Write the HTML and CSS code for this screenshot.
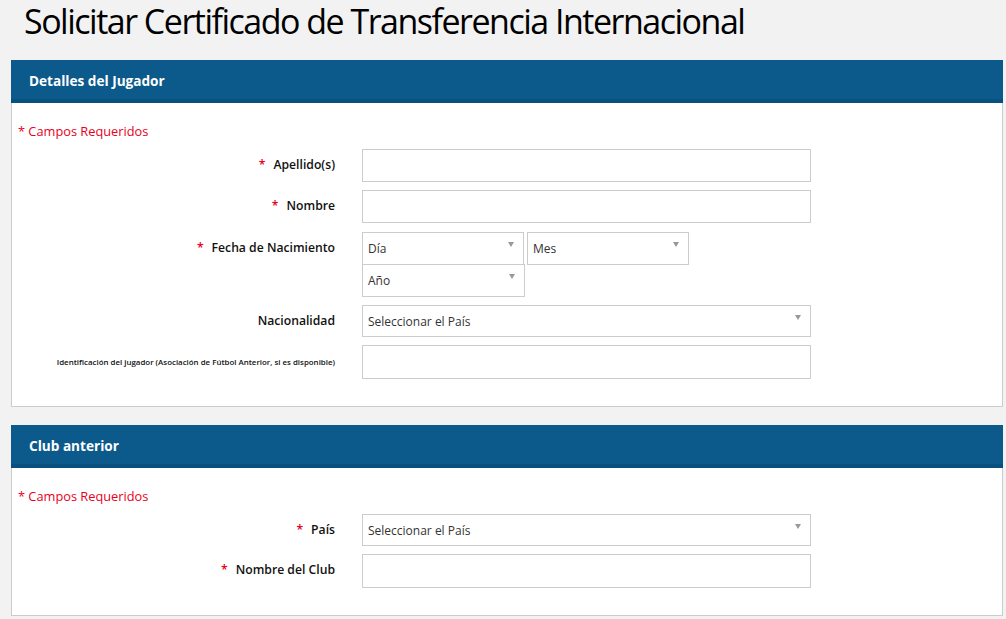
FILE: index.html
```html
<!DOCTYPE html>
<html lang="es">
<head>
  <meta charset="UTF-8">
  <title>Solicitar Certificado de Transferencia Internacional</title>
  <link rel="stylesheet" href="styles.css">
</head>
<body>
  <h1 class="page-title">Solicitar Certificado de Transferencia Internacional</h1>

  <div class="panel">
    <div class="panel-head">Detalles del Jugador</div>
    <div class="panel-body">
      <p class="req-note">* Campos Requeridos</p>

      <div class="form-row">
        <label class="field-label"><span class="star">*</span>Apellido(s)</label>
        <div class="text-input"></div>
      </div>
      <div class="form-row">
        <label class="field-label"><span class="star">*</span>Nombre</label>
        <div class="text-input"></div>
      </div>
      <div class="form-row date-row">
        <label class="field-label"><span class="star">*</span>Fecha de Nacimiento</label>
        <div class="date-group">
          <div class="select small"><span>Día</span><i class="caret"></i></div>
          <div class="select small"><span>Mes</span><i class="caret"></i></div>
          <div class="select small year"><span>Año</span><i class="caret"></i></div>
        </div>
      </div>
      <div class="form-row">
        <label class="field-label">Nacionalidad</label>
        <div class="select"><span>Seleccionar el País</span><i class="caret"></i></div>
      </div>
      <div class="form-row">
        <label class="field-label tiny">Identificación del jugador (Asociación de Fútbol Anterior, si es disponible)</label>
        <div class="text-input tall"></div>
      </div>
    </div>
  </div>

  <div class="panel">
    <div class="panel-head">Club anterior</div>
    <div class="panel-body">
      <p class="req-note">* Campos Requeridos</p>

      <div class="form-row">
        <label class="field-label"><span class="star">*</span>País</label>
        <div class="select"><span>Seleccionar el País</span><i class="caret"></i></div>
      </div>
      <div class="form-row">
        <label class="field-label"><span class="star">*</span>Nombre del Club</label>
        <div class="text-input tall"></div>
      </div>
    </div>
  </div>
</body>
</html>
```

FILE: styles.css
```css
* {
  box-sizing: border-box;
}

body {
  margin: 0;
  background: #f2f2f2;
  font-family: 'Open Sans', 'DejaVu Sans', sans-serif;
  color: #111;
}

.page-title {
  margin: 0;
  height: 60px;
  padding: 0 0 0 24px;
  font-size: 34px;
  font-weight: 500;
  line-height: 42px;
  letter-spacing: -1.5px;
  color: #000;
}

.panel {
  margin: 0 3px 18px 11px;
  background: #fff;
  border: 1px solid #ccc;
  border-top: none;
}

.panel-head {
  margin: 0 -1px;
  height: 43px;
  padding: 0 0 0 18px;
  background: #0b5a8b;
  border-bottom: 4px solid #08507d;
  color: #fff;
  font-size: 13.6px;
  font-weight: 700;
  line-height: 41px;
}

.panel-body {
  padding: 19px 0 27px 0;
}

.req-note {
  margin: 0 0 9px 6px;
  color: #e8001c;
  font-size: 12.8px;
  line-height: 18px;
}

.form-row {
  display: grid;
  grid-template-columns: 323px 449px;
  column-gap: 27px;
  align-items: start;
  margin-bottom: 8px;
}

.form-row:last-child {
  margin-bottom: 0;
}

.date-row {
  margin-top: 9px;
}

.field-label {
  display: block;
  text-align: right;
  font-size: 12.2px;
  font-weight: 600;
  line-height: 32px;
  color: #111;
}

.field-label.tiny {
  font-size: 7.9px;
  line-height: 34px;
}

.star {
  color: #e8001c;
  margin-right: 8px;
}

.text-input {
  height: 33px;
  border: 1px solid #ccc;
  background: #fff;
}

.text-input.tall {
  height: 34px;
}

.select {
  display: flex;
  align-items: center;
  justify-content: space-between;
  height: 32px;
  padding: 0 9px 0 5px;
  border: 1px solid #ccc;
  background: #fff;
  font-size: 12px;
  color: #333;
}

.caret {
  align-self: flex-start;
  margin-top: 9px;
  width: 0;
  height: 0;
  border-left: 3.5px solid transparent;
  border-right: 3.5px solid transparent;
  border-top: 5px solid #999;
}

.date-group {
  display: flex;
  flex-wrap: wrap;
  column-gap: 3px;
  width: 330px;
}

.select.small {
  width: 162px;
  height: 33px;
}

.select.year {
  width: 163px;
  margin-top: -1px;
}
```
